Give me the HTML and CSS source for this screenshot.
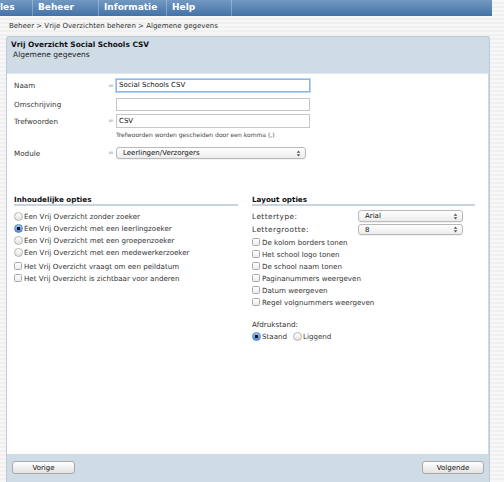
FILE: index.html
```html
<!DOCTYPE html>
<html lang="nl">
<head>
<meta charset="utf-8">
<title>Vrij Overzicht</title>
<link rel="stylesheet" href="styles.css">
</head>
<body>
<nav class="topbar">
  <span class="nav-item nav-first">les</span>
  <span class="nav-item">Beheer</span>
  <span class="nav-item nav-wide">Informatie</span>
  <span class="nav-item nav-narrow">Help</span>
</nav>
<div class="breadcrumb">Beheer &gt; Vrije Overzichten beheren &gt; Algemene gegevens</div>
<div class="panel">
  <div class="panel-head">
    <div class="title">Vrij Overzicht Social Schools CSV</div>
    <div class="subtitle">Algemene gegevens</div>
  </div>
  <div class="panel-body">
    <div class="form-row row-naam">
      <span class="label">Naam</span><span class="eq">=</span>
      <div class="input focus">Social Schools CSV</div>
    </div>
    <div class="form-row row-omschr">
      <span class="label">Omschrijving</span><span class="eq"></span>
      <div class="input"></div>
    </div>
    <div class="form-row row-tref">
      <span class="label">Trefwoorden</span><span class="eq">=</span>
      <div class="input tall">CSV</div>
    </div>
    <div class="form-row row-hint">
      <span></span><span></span>
      <div class="hint">Trefwoorden worden gescheiden door een komma (,)</div>
    </div>
    <div class="form-row row-module">
      <span class="label">Module</span><span class="eq">=</span>
      <div class="select module-select"><span>Leerlingen/Verzorgers</span><svg class="arrows" width="5" height="7" viewBox="0 0 5 7"><path d="M0.7 2.8 L2.5 0.6 L4.3 2.8Z M0.7 4.2 L2.5 6.4 L4.3 4.2Z" fill="#555"/></svg></div>
    </div>

    <div class="options">
      <div class="col">
        <div class="section-title">Inhoudelijke opties</div>
        <div class="opt-list">
          <div class="opt"><span class="radio"></span>Een Vrij Overzicht zonder zoeker</div>
          <div class="opt"><span class="radio checked"></span>Een Vrij Overzicht met een leerlingzoeker</div>
          <div class="opt"><span class="radio"></span>Een Vrij Overzicht met een groepenzoeker</div>
          <div class="opt"><span class="radio"></span>Een Vrij Overzicht met een medewerkerzoeker</div>
          <div class="opt opt-check"><span class="check"></span>Het Vrij Overzicht vraagt om een peildatum</div>
          <div class="opt"><span class="check"></span>Het Vrij Overzicht is zichtbaar voor anderen</div>
        </div>
      </div>
      <div class="col">
        <div class="section-title">Layout opties</div>
        <div class="layout-grid">
          <span class="label">Lettertype:</span>
          <div class="select font-select"><span>Arial</span><svg class="arrows" width="5" height="7" viewBox="0 0 5 7"><path d="M0.7 2.8 L2.5 0.6 L4.3 2.8Z M0.7 4.2 L2.5 6.4 L4.3 4.2Z" fill="#555"/></svg></div>
          <span class="label">Lettergrootte:</span>
          <div class="select size-select"><span>8</span><svg class="arrows" width="5" height="7" viewBox="0 0 5 7"><path d="M0.7 2.8 L2.5 0.6 L4.3 2.8Z M0.7 4.2 L2.5 6.4 L4.3 4.2Z" fill="#555"/></svg></div>
        </div>
        <div class="check-list">
          <div class="opt"><span class="check"></span>De kolom borders tonen</div>
          <div class="opt"><span class="check"></span>Het school logo tonen</div>
          <div class="opt"><span class="check"></span>De school naam tonen</div>
          <div class="opt"><span class="check"></span>Paginanummers weergeven</div>
          <div class="opt"><span class="check"></span>Datum weergeven</div>
          <div class="opt"><span class="check"></span>Regel volgnummers weergeven</div>
        </div>
        <div class="orient-label">Afdrukstand:</div>
        <div class="orient">
          <span class="opt"><span class="radio checked"></span>Staand</span>
          <span class="opt"><span class="radio"></span>Liggend</span>
        </div>
      </div>
    </div>
  </div>
  <div class="panel-foot">
    <button class="btn btn-prev">Vorige</button>
    <button class="btn btn-next">Volgende</button>
  </div>
</div>
</body>
</html>
```

FILE: styles.css
```css
* { box-sizing: border-box; }

body {
  margin: 0;
  width: 504px;
  height: 482px;
  overflow: hidden;
  font-family: "DejaVu Sans", Verdana, sans-serif;
  font-size: 7px;
  color: #333;
  background: repeating-linear-gradient(to bottom, #f7f7f7 0, #f7f7f7 2px, #f0f0f0 2px, #f0f0f0 4px);
}

.topbar {
  display: flex;
  width: 492px;
  height: 16px;
  background: linear-gradient(#7299c2, #4472a6);
}

.nav-item {
  display: block;
  width: 66px;
  padding-left: 5px;
  color: #fff;
  font-weight: bold;
  font-size: 9px;
  line-height: 15px;
  border-right: 1px solid rgba(255, 255, 255, 0.28);
}
.nav-first { width: 33px; padding-left: 0; }
.nav-wide { width: 68px; }
.nav-narrow { width: 65px; }

.breadcrumb {
  height: 20px;
  line-height: 21px;
  padding-left: 9px;
  color: #333;
}

.panel {
  margin-left: 6px;
  width: 484px;
  border: 1px solid #bccbd7;
  border-bottom: none;
  border-radius: 3px 3px 0 0;
  background: #cfdce6;
}

.panel-head {
  height: 36px;
  padding: 3px 4px 0;
}
.title {
  font-weight: bold;
  font-size: 7.4px;
  line-height: 10px;
  color: #111;
}
.subtitle {
  padding-left: 2px;
  font-size: 7.5px;
  line-height: 10px;
  color: #222;
}

.panel-body {
  height: 381px;
  margin: 0 1px 0 0;
  background: #fff;
  padding: 5px 13px 0 7px;
  border-top: 1px solid #dfe7ee;
}

.form-row {
  display: grid;
  grid-template-columns: 94px 8px 194px;
  align-items: center;
}
.row-omschr { margin-top: 6px; }
.row-tref { margin-top: 3px; }
.row-hint { height: 10px; margin-top: 1px; }
.row-module { margin-top: 8px; }

.label { color: #333; font-size: 7.2px; }
.eq { color: #b0b0b0; font-size: 7px; }

.input {
  height: 13px;
  border: 1px solid #c6c6c6;
  padding-left: 2px;
  line-height: 11px;
  color: #111;
}
.input.tall { height: 14px; line-height: 12px; }
.input.focus {
  border-color: #8cb7e6;
  box-shadow: 0 0 0 1px #b9d4f2;
}
.hint { font-size: 6px; color: #444; }

.select {
  display: flex;
  justify-content: space-between;
  align-items: center;
  height: 12px;
  padding: 0 4px 0 6px;
  border: 1px solid #b9b9b9;
  border-radius: 3px;
  background: linear-gradient(#ffffff, #ececec);
  color: #111;
  box-shadow: 0 1px 0 rgba(0, 0, 0, 0.05);
}
.module-select { width: 190px; }

.options {
  display: grid;
  grid-template-columns: 224px 223px;
  column-gap: 14px;
  margin-top: 36px;
}

.section-title {
  font-weight: bold;
  font-size: 7.2px;
  color: #111;
  line-height: 9px;
  border-bottom: 2px solid #c9d3dc;
}

.opt-list { margin-top: 4px; }
.opt {
  display: flex;
  align-items: center;
  height: 12px;
  color: #333;
  font-size: 7.1px;
}
.opt-check { margin-top: 2px; }

.radio {
  width: 9px;
  height: 9px;
  margin-right: 1px;
  border: 1px solid #b4b4b4;
  border-radius: 50%;
  background: linear-gradient(#ffffff, #e2e2e2);
}
.radio.checked {
  border-color: #5a86bd;
  background: radial-gradient(circle at 50% 50%, #111 0 1.4px, transparent 1.8px), linear-gradient(#9cc6f4, #4a8fe0);
}

.check {
  width: 8px;
  height: 8px;
  margin-right: 2px;
  border: 1px solid #a8a8a8;
  border-radius: 1.5px;
  background: linear-gradient(#ffffff, #ececec);
}

.layout-grid {
  display: grid;
  grid-template-columns: 106px 105px;
  row-gap: 2px;
  align-items: center;
  margin-top: 4px;
}
.layout-grid .label { letter-spacing: 0.4px; font-size: 7.4px; }
.size-select { height: 11px; }

.check-list { margin-top: 1px; }

.orient-label {
  margin-top: 12px;
  line-height: 10px;
  font-size: 7.2px;
}
.orient {
  display: flex;
  gap: 6px;
  height: 12px;
}

.panel-foot {
  display: flex;
  justify-content: space-between;
  height: 30px;
  padding: 7px 5px 0;
}
.btn {
  height: 13px;
  padding: 0;
  font-family: "DejaVu Sans", Verdana, sans-serif;
  font-size: 7px;
  color: #111;
  border: 1px solid #a9a9a9;
  border-radius: 3px;
  background: linear-gradient(#ffffff, #e3e3e3);
}
.btn-prev { width: 63px; }
.btn-next { width: 62px; }
```
